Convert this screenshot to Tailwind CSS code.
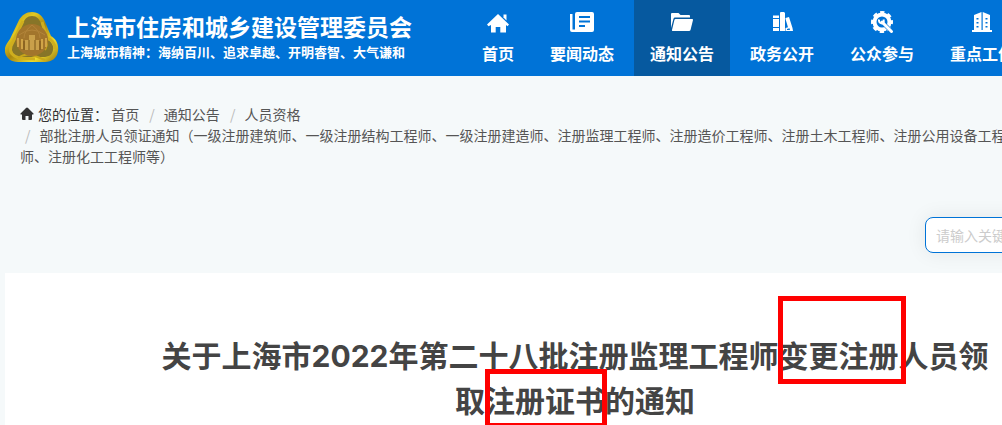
<!DOCTYPE html>
<html lang="zh-CN">

<head>
  <meta charset="UTF-8" />
  <meta name="viewport" content="width=device-width, initial-scale=1.0" />
  <title>上海市住房和城乡建设管理委员会</title>
  <script src="https://cdn.jsdelivr.net/npm/@tailwindcss/browser@4"></script>
</head>

<body class="bg-[#f5f9fa] font-['Noto_Sans_CJK_SC',sans-serif] text-[#444]">
  <div class="h-screen overflow-hidden flex flex-col">

    <!-- Header -->
    <header class="bg-[#0073d7] text-white shrink-0">
      <div class="flex w-[1140px] h-[76px] ml-[5px]">
        <a href="#" class="flex items-center w-[461px] shrink-0">
          <svg class="w-[54px] h-[54px] mr-2" viewBox="0 0 54 54">
            <defs>
              <linearGradient id="gold" x1="0" y1="0" x2="1" y2="1">
                <stop offset="0" stop-color="#a58a12" />
                <stop offset=".3" stop-color="#e2c821" />
                <stop offset=".5" stop-color="#a8860f" />
                <stop offset=".75" stop-color="#f0dc2c" />
                <stop offset="1" stop-color="#947310" />
              </linearGradient>
            </defs>
            <path d="M27 1C33 1 38 5 40 11L46 25C51 28 54 33 53 40C52 47 47 51 40 51H13C6 51 1 47 0 41C-1 36 2 32 5 28L14 9C17 4 21 1 27 1Z" fill="url(#gold)" />
            <path d="M27 5C32 5 34 8 36 12L41 28C46 30 49 34 48 39C47 44 44 46 38 46H15C9 46 6 44 5 40C5 36 7 33 10 29L18 12C20 8 22 5 27 5Z" fill="#877528" />
            <path d="M18 10L6 35C4 41 8 45 14 47L30 48M37 11L42 27C48 29 50 33 50 38" fill="none" stroke="#cfae1e" stroke-width="3" />
            <path d="M13 47Q21 41 30 45L40 49M40 27Q44 31 40 39" fill="none" stroke="#c9a719" stroke-width="2" />
            <circle cx="27" cy="29" r="16" fill="#a2752c" />
            <path d="M27 14Q19 20 19 27M27 14Q35 20 35 27M14 24Q27 14 40 24" fill="none" stroke="#b3853a" />
            <path d="M13 27v9M17 28v10M37 28v10M41 27v9" stroke="#d0a447" stroke-width="2" />
            <path d="M20 39V29h4v-5h6v5h4v10z" fill="#c9a04a" />
            <path d="M19 30v9M24 29v10M30 29v10M35 30v9" stroke="#795619" />
          </svg>
          <span class="flex flex-col pb-1">
            <span class="text-[23px] leading-8 font-bold">上海市住房和城乡建设管理委员会</span>
            <span class="text-[13px] leading-5 font-bold">上海城市精神：海纳百川、追求卓越、开明睿智、大气谦和</span>
          </span>
        </a>

        <nav class="flex gap-1 text-base leading-6 font-bold whitespace-nowrap">
          <a href="#" class="flex flex-col items-center gap-[7px] px-4 pt-[10px]">
            <svg class="w-6 h-6" viewBox="0 0 24 24" fill="currentColor">
              <path d="M12 4L23 14.500 21.500 16.200 20 15V22.500H14.300V17H9.700V22.500H5V15L2.500 16.200 1 14.500Z" />
              <path d="M17.500 4.500H20.500V10.500L17.500 7.500Z" />
            </svg>
            首页
          </a>
          <a href="#" class="flex flex-col items-center gap-[7px] px-4 pt-[10px]">
            <svg class="w-6 h-6" viewBox="0 0 24 24" fill="currentColor">
              <path fill-rule="evenodd" d="M7 2H22Q24 2 24 4V20Q24 22 22 22H2Q0 22 0 20V4H2.500V19.500H5V4Q5 2 7 2ZM9 6V8H20V6ZM9 10.500V12.500H20V10.500ZM9 15V17H15V15Z" />
            </svg>
            要闻动态
          </a>
          <a href="#" class="flex flex-col items-center gap-[7px] px-4 pt-[10px] bg-[#06599f]">
            <svg class="w-6 h-6" viewBox="0 0 24 24" fill="currentColor">
              <path d="M1 4Q1 3 2 3H8.500L10.500 5H19Q20 5 20 6V7.500H5Q3.800 7.500 3.500 8.700L1 18Z" />
              <path d="M5.500 9H22Q23.300 9 23 10L20.500 20Q20.200 21 19 21H2.500Q1.800 21 2 20L4.400 10Q4.700 9 5.500 9Z" />
            </svg>
            通知公告
          </a>
          <a href="#" class="flex flex-col items-center gap-[7px] px-4 pt-[10px]">
            <svg class="w-6 h-6" viewBox="0 0 24 24" fill="currentColor">
              <path d="M3 5.500H9V8H3ZM3 9H9V17H3ZM3 18H9V21H3ZM10 2.500L11 2H14L15 3V21H10Z" />
              <path fill-rule="evenodd" d="M15.500 8L19 7 22.500 18 23 21H15.500V18L18 17.200 15.500 9ZM17 19V20H20L19.500 18.200Z" />
            </svg>
            政务公开
          </a>
          <a href="#" class="flex flex-col items-center gap-[7px] px-4 pt-[10px]">
            <svg class="w-6 h-6" viewBox="0 0 24 24" fill="none" stroke="currentColor">
              <circle cx="12" cy="12" r="7.500" stroke-width="4" />
              <circle cx="12" cy="12" r="9.500" stroke-width="3" stroke-dasharray="4.200 3.260" stroke-dashoffset="2.100" />
              <path d="M14 14L21.500 21.500" stroke="#0073d7" stroke-width="4" />
              <path d="M12 12L21.500 21.500" stroke-width="3" stroke-linecap="round" />
              <path d="M9 9.500Q8.500 13 12 13.500Q14.500 13 13.500 9.500" stroke-width="2" />
            </svg>
            公众参与
          </a>
          <a href="#" class="flex flex-col items-center gap-[7px] px-4 pt-[10px]">
            <svg class="w-6 h-6" viewBox="0 0 24 24" fill="currentColor">
              <path fill-rule="evenodd" d="M4 5L11.500 2V20H12.700V2L20 5V20H22V22H2V20H4ZM6.500 8V9.500H8.500V8ZM6.500 12V13.500H8.500V12ZM6.500 16V17.500H8.500V16ZM15.500 8V9.500H17.500V8ZM15.500 12V13.500H17.500V12ZM15.500 16V17.500H17.500V16Z" />
            </svg>
            重点工作
          </a>
        </nav>
      </div>
    </header>

    <main class="flex-1 flex flex-col w-[1140px] ml-[5px]">
      <!-- Breadcrumb -->
      <nav class="w-[1020px] px-[15px] pt-7 text-sm leading-[21px] text-[#555]">
        <svg class="inline-block w-[14px] h-[14px] mr-1 align-[-1px]" viewBox="0 0 14 14" fill="#333">
          <path d="M6 1Q7 0 8 1L13.500 6.500Q14 7.500 13 7.500H12V12Q12 13 11 13H8.500V9H5.500V13H3Q2 13 2 12V7.500H1Q0 7.500 .5 6.500Z" />
        </svg><span class="text-[#333]">您的位置：</span>
        <ol class="inline">
          <li class="inline-block mr-0.5"><a href="#">首页</a></li>
          <li class="inline-block mr-0.5"><span class="px-[5px] mr-1 text-[#bbb]">/</span><a href="#">通知公告</a></li>
          <li class="inline-block mr-0.5"><span class="px-[5px] mr-1 text-[#bbb]">/</span><a href="#">人员资格</a></li>
          <li class="inline-block"><span class="px-[5px] mr-1 text-[#bbb]">/</span><a href="#">部批注册人员领证通知（一级注册建筑师、一级注册结构工程师、一级注册建造师、注册监理工程师、注册造价工程师、注册土木工程师、注册公用设备工程师、注册化工工程师等）</a></li>
        </ol>
      </nav>

      <!-- Search -->
      <form class="flex justify-end pr-5 mt-[50px] mb-5">
        <input type="text" aria-label="搜索" placeholder="请输入关键字" class="w-[200px] h-9 px-[10px] bg-white border border-[#0073d7] rounded-lg text-sm placeholder:text-[#ccc] shadow-[0_0_20px_rgba(0,0,0,0.08)]" />
      </form>

      <!-- Article -->
      <article class="relative flex-1 bg-white px-[150px] pt-[61px]">
        <h1 class="font-['Inter','Noto_Sans_CJK_SC',sans-serif] text-[30px] leading-[45px] font-bold text-center">关于上海市2022年第二十八批注册监理工程师变更注册人员领取注册证书的通知</h1>
        <!-- Highlight marks -->
        <div class="absolute left-[773px] top-[23px] w-32 h-22 border-5 border-[#f00]"></div>
        <div class="absolute left-[480px] top-24 w-[122px] h-[59px] border-5 border-[#f00]"></div>
      </article>
    </main>

  </div>
</body>

</html>
